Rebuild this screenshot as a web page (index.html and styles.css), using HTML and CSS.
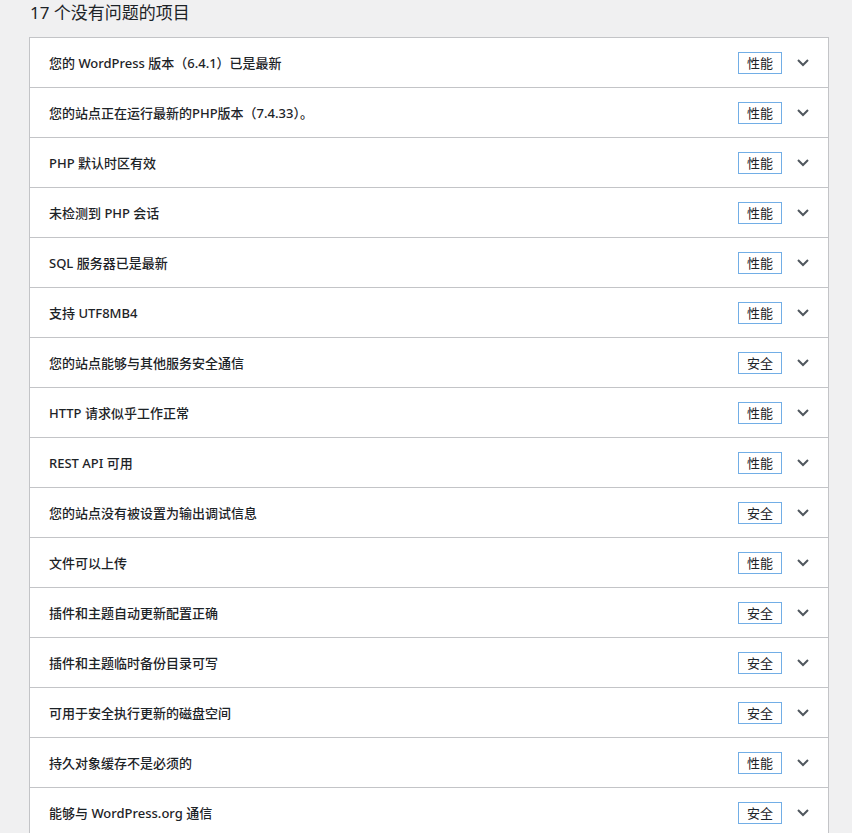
FILE: index.html
```html
<!DOCTYPE html>
<html lang="zh-CN">
<head>
<meta charset="utf-8">
<title>站点健康</title>
<link rel="stylesheet" href="styles.css">
</head>
<body>
<div class="wrap">
  <h3 class="heading">17 个没有问题的项目</h3>
  <div class="accordion">
    <div class="row"><span class="title">您的 WordPress 版本（6.4.1）已是最新</span><span class="badge">性能</span><svg class="chev" width="12" height="8" viewBox="0 0 12 8"><polyline points="1,1 6,6 11,1" fill="none" stroke="#50575e" stroke-width="2"/></svg></div>
    <div class="row"><span class="title">您的站点正在运行最新的PHP版本（7.4.33）。</span><span class="badge">性能</span><svg class="chev" width="12" height="8" viewBox="0 0 12 8"><polyline points="1,1 6,6 11,1" fill="none" stroke="#50575e" stroke-width="2"/></svg></div>
    <div class="row"><span class="title">PHP 默认时区有效</span><span class="badge">性能</span><svg class="chev" width="12" height="8" viewBox="0 0 12 8"><polyline points="1,1 6,6 11,1" fill="none" stroke="#50575e" stroke-width="2"/></svg></div>
    <div class="row"><span class="title">未检测到 PHP 会话</span><span class="badge">性能</span><svg class="chev" width="12" height="8" viewBox="0 0 12 8"><polyline points="1,1 6,6 11,1" fill="none" stroke="#50575e" stroke-width="2"/></svg></div>
    <div class="row"><span class="title">SQL 服务器已是最新</span><span class="badge">性能</span><svg class="chev" width="12" height="8" viewBox="0 0 12 8"><polyline points="1,1 6,6 11,1" fill="none" stroke="#50575e" stroke-width="2"/></svg></div>
    <div class="row"><span class="title">支持 UTF8MB4</span><span class="badge">性能</span><svg class="chev" width="12" height="8" viewBox="0 0 12 8"><polyline points="1,1 6,6 11,1" fill="none" stroke="#50575e" stroke-width="2"/></svg></div>
    <div class="row"><span class="title">您的站点能够与其他服务安全通信</span><span class="badge">安全</span><svg class="chev" width="12" height="8" viewBox="0 0 12 8"><polyline points="1,1 6,6 11,1" fill="none" stroke="#50575e" stroke-width="2"/></svg></div>
    <div class="row"><span class="title">HTTP 请求似乎工作正常</span><span class="badge">性能</span><svg class="chev" width="12" height="8" viewBox="0 0 12 8"><polyline points="1,1 6,6 11,1" fill="none" stroke="#50575e" stroke-width="2"/></svg></div>
    <div class="row"><span class="title">REST API 可用</span><span class="badge">性能</span><svg class="chev" width="12" height="8" viewBox="0 0 12 8"><polyline points="1,1 6,6 11,1" fill="none" stroke="#50575e" stroke-width="2"/></svg></div>
    <div class="row"><span class="title">您的站点没有被设置为输出调试信息</span><span class="badge">安全</span><svg class="chev" width="12" height="8" viewBox="0 0 12 8"><polyline points="1,1 6,6 11,1" fill="none" stroke="#50575e" stroke-width="2"/></svg></div>
    <div class="row"><span class="title">文件可以上传</span><span class="badge">性能</span><svg class="chev" width="12" height="8" viewBox="0 0 12 8"><polyline points="1,1 6,6 11,1" fill="none" stroke="#50575e" stroke-width="2"/></svg></div>
    <div class="row"><span class="title">插件和主题自动更新配置正确</span><span class="badge">安全</span><svg class="chev" width="12" height="8" viewBox="0 0 12 8"><polyline points="1,1 6,6 11,1" fill="none" stroke="#50575e" stroke-width="2"/></svg></div>
    <div class="row"><span class="title">插件和主题临时备份目录可写</span><span class="badge">安全</span><svg class="chev" width="12" height="8" viewBox="0 0 12 8"><polyline points="1,1 6,6 11,1" fill="none" stroke="#50575e" stroke-width="2"/></svg></div>
    <div class="row"><span class="title">可用于安全执行更新的磁盘空间</span><span class="badge">安全</span><svg class="chev" width="12" height="8" viewBox="0 0 12 8"><polyline points="1,1 6,6 11,1" fill="none" stroke="#50575e" stroke-width="2"/></svg></div>
    <div class="row"><span class="title">持久对象缓存不是必须的</span><span class="badge">性能</span><svg class="chev" width="12" height="8" viewBox="0 0 12 8"><polyline points="1,1 6,6 11,1" fill="none" stroke="#50575e" stroke-width="2"/></svg></div>
    <div class="row"><span class="title">能够与 WordPress.org 通信</span><span class="badge">安全</span><svg class="chev" width="12" height="8" viewBox="0 0 12 8"><polyline points="1,1 6,6 11,1" fill="none" stroke="#50575e" stroke-width="2"/></svg></div>
  </div>
</div>
</body>
</html>
```

FILE: styles.css
```css
html, body {
  margin: 0;
  padding: 0;
  background: #f0f0f1;
}
body {
  font-family: "Noto Sans", "Noto Sans CJK SC", sans-serif;
  color: #1d2327;
  font-size: 13px;
}
.wrap {
  padding-left: 29px;
  width: 800px;
}
.heading {
  margin: 0 0 12px 0;
  padding-left: 1px;
  font-size: 17px;
  font-weight: 400;
  line-height: 25px;
}
.accordion {
  background: #fff;
  border: 1px solid #c3c4c7;
  border-bottom: none;
}
.row {
  display: flex;
  align-items: center;
  height: 49px;
  border-bottom: 1px solid #c3c4c7;
  padding: 0 19px;
}
.title {
  flex: 1;
  font-weight: 500;
  line-height: 20px;
}
.badge {
  border: 1px solid #72aee6;
  padding: 0 8px;
  line-height: 20px;
  font-size: 13px;
  margin-right: 15px;
}
.chev {
  display: block;
}
```
